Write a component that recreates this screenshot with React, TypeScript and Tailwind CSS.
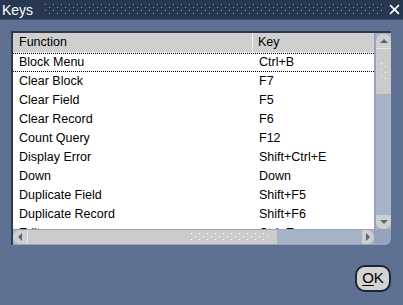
import React from 'react';

/**
 * Oracle Forms style "Keys" dialog
 */

const rows: [string, string][] = [
  ['Block Menu', 'Ctrl+B'],
  ['Clear Block', 'F7'],
  ['Clear Field', 'F5'],
  ['Clear Record', 'F6'],
  ['Count Query', 'F12'],
  ['Display Error', 'Shift+Ctrl+E'],
  ['Down', 'Down'],
  ['Duplicate Field', 'Shift+F5'],
  ['Duplicate Record', 'Shift+F6'],
  ['Edit', 'Ctrl+E'],
];

function Dots({ id, color, light }: { id: string; color: string; light?: string }) {
  return (
    <svg className="w-full h-full" xmlns="http://www.w3.org/2000/svg">
      <defs>
        <pattern id={id} width="8" height="6" patternUnits="userSpaceOnUse">
          <rect x="0" y="0" width="1" height="1" fill={color} />
          <rect x="4" y="3" width="1" height="1" fill={color} />
          {light && <rect x="1" y="1" width="1" height="1" fill={light} />}
          {light && <rect x="5" y="4" width="1" height="1" fill={light} />}
        </pattern>
      </defs>
      <rect width="100%" height="100%" fill={`url(#${id})`} />
    </svg>
  );
}

function Arrow({ dir }: { dir: 'up' | 'down' | 'left' | 'right' }) {
  const pts = {
    up: '1,6 5,2 9,6',
    down: '1,2 5,6 9,2',
    left: '6,1 2,5 6,9',
    right: '2,1 6,5 2,9',
  }[dir];
  const box = dir === 'up' || dir === 'down' ? '0 0 10 8' : '0 0 8 10';
  const cls = dir === 'up' || dir === 'down' ? 'w-[10px] h-[8px]' : 'w-[8px] h-[10px]';
  return (
    <svg viewBox={box} className={cls}>
      <polygon points={pts} fill="#56677f" />
    </svg>
  );
}

export default function App() {
  return (
    <div
      className="w-[403px] h-[305px] bg-[#5e7192] flex flex-col overflow-hidden"
      style={{ fontFamily: '"Liberation Sans", Arial, sans-serif' }}
    >
      {/* Title bar */}
      <div className="h-[20px] bg-[#283750] flex items-center border-b border-[#3f5070]">
        <span className="text-white text-[14px] pl-[2px] pr-[12px] leading-none">Keys</span>
        <div className="flex-1 h-[12px]">
          <Dots id="title-dots" color="#8f9db4" light="#1a2438" />
        </div>
        <span className="w-[18px] flex items-center justify-center">
          <svg viewBox="0 0 10 10" className="w-[11px] h-[11px]">
            <path d="M1 1 L9 9 M9 1 L1 9" stroke="white" strokeWidth="1.5" />
          </svg>
        </span>
      </div>

      {/* Body */}
      <div className="flex-1 flex flex-col pl-[11px] pr-[12px] pt-[11px]">
        <div className="w-[380px] h-[214px] bg-[#95a4bc] rounded-br-[6px] border-l-2 border-t-2 border-[#2d3a52] flex flex-col">
          <div className="flex flex-1 min-h-0">
            {/* List */}
            <div className="w-[361px] bg-white flex flex-col overflow-hidden text-[12.5px] text-black">
              <div className="h-[20px] bg-[#cfcfcf] flex shrink-0 border-b border-[#e8e8e8]">
                <div className="w-[240px] pl-[6px] flex items-center border-r border-[#f0f0f0]">Function</div>
                <div className="flex-1 pl-[5px] flex items-center">Key</div>
              </div>
              {rows.map(([fn, key], i) => (
                <div
                  key={fn}
                  className={`h-[19px] flex shrink-0 ${i === 0 ? 'border-y border-dotted border-black' : ''}`}
                >
                  <div className="w-[240px] pl-[6px] flex items-center">{fn}</div>
                  <div className="flex-1 pl-[6px] flex items-center">{key}</div>
                </div>
              ))}
            </div>
            {/* Vertical scrollbar */}
            <div className="w-[15px] ml-[2px] flex flex-col bg-[#a7b3c6]">
              <div className="h-[14px] mt-[1px] bg-[#cfcfcf] rounded-t-[7px] flex items-center justify-center">
                <Arrow dir="up" />
              </div>
              <div className="h-[46px] bg-[#cbcbcb] border-t border-[#e6e6e6] flex items-center justify-center">
                <div className="w-[6px] h-[18px]">
                  <Dots id="v-dots" color="#ffffff" />
                </div>
              </div>
              <div className="flex-1" />
              <div className="h-[14px] bg-[#cfcfcf] rounded-b-[7px] flex items-center justify-center">
                <Arrow dir="down" />
              </div>
            </div>
          </div>
          {/* Horizontal scrollbar */}
          <div className="h-[14px] mt-[1px] mb-[1px] flex w-[361px] bg-[#a7b3c6]">
            <div className="w-[14px] bg-[#cfcfcf] rounded-l-[7px] flex items-center justify-center">
              <Arrow dir="left" />
            </div>
            <div className="w-[250px] bg-[#cbcbcb] border-l border-[#e6e6e6] flex items-center justify-end pr-[6px]">
              <div className="w-[80px] h-[8px]">
                <Dots id="h-dots" color="#ffffff" />
              </div>
            </div>
            <div className="flex-1" />
            <div className="w-[12px] bg-[#cfcfcf] rounded-r-[7px] flex items-center justify-center">
              <Arrow dir="right" />
            </div>
          </div>
        </div>

        <div className="flex justify-end mt-[20px]">
          <button className="w-[36px] h-[27px] rounded-[10px] border-2 border-[#1c2436] bg-[#d3d3d3] text-[15px] text-black flex items-center justify-center">
            <span className="underline underline-offset-2">O</span>K
          </button>
        </div>
      </div>
    </div>
  );
}
